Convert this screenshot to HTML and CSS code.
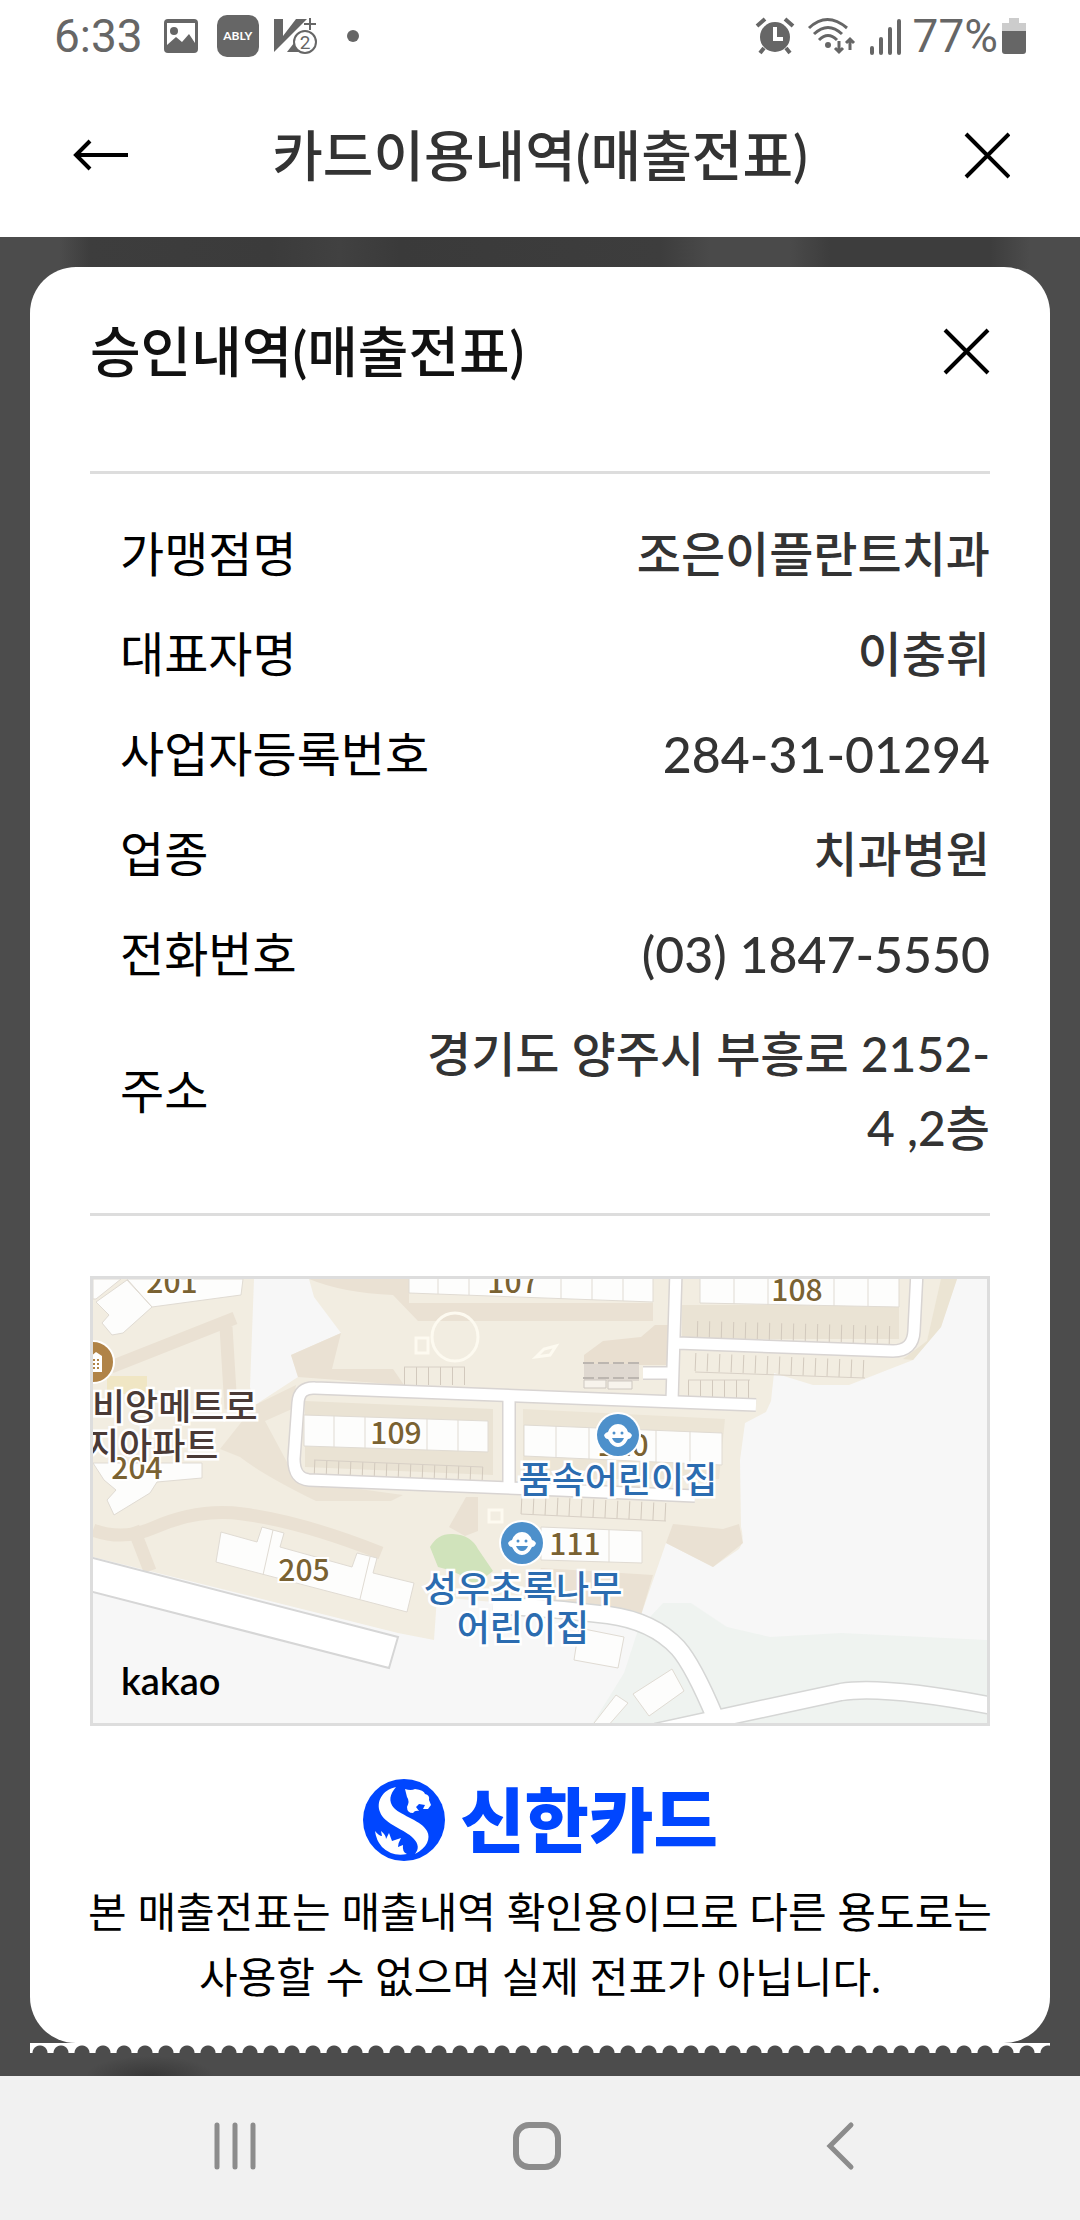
FILE: index.html
```html
<!DOCTYPE html>
<html lang="ko">
<head>
    <meta charset="UTF-8">
    <meta name="viewport" content="width=device-width, initial-scale=1.0">
    <title>카드이용내역(매출전표)</title>
    <link rel="stylesheet" href="styles.css">
</head>
<body>
<div class="status-bar">
    <div class="status-left">
        <span class="clock">6:33</span>
        <svg class="icon-photo" width="36" height="36" viewBox="0 0 36 36">
            <rect x="1" y="1" width="34" height="34" rx="4" fill="#666"/>
            <path d="M4 5h28v20l-6-9-7 8-6-5-9 8z" fill="#fff"/>
            <circle cx="11" cy="13" r="4" fill="#666"/>
        </svg>
        <span class="ably">ABLY</span>
        <svg width="44" height="38" viewBox="0 0 44 38">
            <path d="M1 2h9v17L23 2h11L1 35z" fill="#666"/>
            <path d="M14 35l14-18v18z" fill="#666"/>
            <path d="M37 1v12M31 7h12" stroke="#666" stroke-width="2"/>
            <circle cx="32" cy="25" r="11" fill="#fff" stroke="#666" stroke-width="2"/>
            <text x="32" y="32" class="v-count">2</text>
        </svg>
        <span class="dot"></span>
    </div>
    <div class="status-right">
        <svg width="40" height="38" viewBox="0 0 40 38">
            <circle cx="20" cy="20" r="15" fill="#666"/>
            <path d="M2 9l8-7M38 9l-8-7M9 31l-4 5M31 31l4 5" stroke="#666" stroke-width="4"/>
            <path d="M20 10v12h8" fill="none" stroke="#fff" stroke-width="4"/>
        </svg>
        <svg width="50" height="38" viewBox="0 0 50 38">
            <g fill="none" stroke="#666" stroke-width="3">
                <path d="M2 11q18-17 38 0"/>
                <path d="M7 17q14-13 28 0"/>
                <path d="M12 23q9-9 18 0"/>
                <path d="M32 24v11M28 31l4 4 4-4M43 33V22M39 26l4-4 4 4"/>
            </g>
            <circle cx="21" cy="28" r="3" fill="#666"/>
        </svg>
        <svg width="34" height="38" viewBox="0 0 34 38">
            <path d="M3 31v5M12 22v14M21 12v24M30 4v32" stroke="#666" stroke-width="4" stroke-linecap="round"/>
        </svg>
        <span class="battery-text">77%</span>
        <svg width="24" height="38" viewBox="0 0 24 38">
            <path d="M7 1h10v5h7v9H0V6h7z" fill="#ccc"/>
            <path d="M0 14h24v20q0 3-3 3H3q-3 0-3-3z" fill="#666"/>
        </svg>
    </div>
</div>

<header class="navbar">
    <button class="icon-btn" aria-label="뒤로">
        <svg width="60" height="60" viewBox="0 0 60 60" fill="none" stroke="#000" stroke-width="4">
            <path d="M58 30H6M20 16L6 30l14 14"/>
        </svg>
    </button>
    <h1>카드이용내역(매출전표)</h1>
    <button class="icon-btn" aria-label="닫기">
        <svg width="60" height="60" viewBox="0 0 60 60" fill="none" stroke="#000" stroke-width="4">
            <path d="M16 9l43 43M59 9L16 52"/>
        </svg>
    </button>
</header>

<main class="backdrop">
    <section class="receipt">
        <div class="receipt-head">
            <h2>승인내역(매출전표)</h2>
            <button class="icon-btn" aria-label="매출전표 닫기">
                <svg width="60" height="60" viewBox="0 0 60 60" fill="none" stroke="#000" stroke-width="4">
                    <path d="M15 9l43 43M58 9L15 52"/>
                </svg>
            </button>
        </div>

        <dl class="details">
            <div class="row"><dt>가맹점명</dt><dd>조은이플란트치과</dd></div>
            <div class="row"><dt>대표자명</dt><dd>이충휘</dd></div>
            <div class="row"><dt>사업자등록번호</dt><dd class="number">284-31-01294</dd></div>
            <div class="row"><dt>업종</dt><dd>치과병원</dd></div>
            <div class="row"><dt>전화번호</dt><dd class="number">(03) 1847-5550</dd></div>
            <div class="row"><dt>주소</dt><dd>경기도 양주시 부흥로 2152-<wbr>4 ,2층</dd></div>
        </dl>

        <div class="map">
            <svg viewBox="0 0 894 444">
                <defs>
                    <g id="face">
                        <circle r="23" fill="#fff"/>
                        <circle r="21" fill="#4d90cb"/>
                        <path d="M-14 0q2-3 4-3 3-8 10-8t10 8q2 0 4 3-1 4-4 4-4 8-10 8t-10-8q-3 0-4-4z" fill="#fff"/>
                        <circle cx="-4" cy="-2" r="1.5" fill="#4d90cb"/>
                        <circle cx="4" cy="-2" r="1.5" fill="#4d90cb"/>
                        <path d="M-6 3H6q-2 5-6 5t-6-5z" fill="#4d90cb"/>
                    </g>
                    <g id="roads">
                        <path d="M663 126L427 117 222 109Q206 108 205 124L201 180Q201 200 216 201L467 211 602 217"/>
                        <path d="M416 118V208M583-8L579 122M584 64L800 72Q820 72 821 52L824-8M550 94H578"/>
                    </g>
                    <g id="lanes">
                        <path d="M400 326L470 331 515 336Q560 342 585 369 600 386 622 438"/>
                        <path d="M563 453L641 436 748 413Q790 406 900 427"/>
                    </g>
                </defs>

                <!-- ground -->
                <rect width="894" height="444" fill="#f7f7f7"/>
                <path d="M0 0H864L848 48 820 81 756 106H720L681 94 678 122 673 133 652 144 647 181 648 248Q652 262 646 270L620 288 573 264 548 336 344 318 341 361 305 354 0 278z" fill="#f2ede1"/>
                <path d="M161 0H216L221 18 248 54 198 76 205 98 162 126 157 108z" fill="#f7f7f7"/>
                <path d="M570 324H598L634 348 677 358 748 354 894 361V444H500L531 394 545 351z" fill="#eff3f0"/>

                <!-- footpaths and slopes -->
                <g fill="none" stroke="#eae1d3" stroke-width="13">
                    <path d="M0 251Q30 262 60 249 105 229 150 235 210 243 288 274"/>
                    <path d="M40 248L57 292M18 88L142 39M133 48L138 130"/>
                </g>
                <path d="M216 0Q250 14 300 16L325 42H560V24H316V0z" fill="#eae1d3"/>
                <path d="M248 54L198 76 205 98 311 106 300 90 239 90z" fill="#eae1d3"/>
                <path d="M162 126L203 106 199 130 172 142 195 185 230 205 310 216 298 222 223 222Q170 196 147 178L127 170z" fill="#ebe3d5"/>
                <path d="M491 76L510 62 548 58 562 46H577V86H491z" fill="#e9dfd0"/>
                <path d="M373 218H385V252L372 257 356 248z" fill="#eae1d3"/>
                <path d="M573 264L580 245 630 250 646 245 650 264 620 288z" fill="#eae1d3"/>
                <path d="M448 289L560 296 548 336 430 324z" fill="#eae1d3"/>
                <path d="M848 0H864L848 48 820 81 810 80 834 62z" fill="#ebe4d3"/>
                <path d="M589 26H806V60H589zM212 122L400 130V196L212 188z" fill="#eae3d4"/>
                <path d="M430 130L632 140 626 200H430z" fill="#ece5d6"/>
                <path d="M14 97h40v18H14z" fill="#f0e6c4"/>
                <path d="M337 268Q345 254 360 255 378 256 385 270L400 292 382 306Q365 292 345 288z" fill="#d0e3bb"/>
                <g fill="none" stroke="#fdfaf0" stroke-width="3">
                    <ellipse cx="362" cy="58" rx="23" ry="24"/>
                    <path d="M323 59h12v15h-12zM443 78l8-8 12-3-6 9zM396 231h13v12h-13z"/>
                </g>

                <!-- parking stalls -->
                <g fill="none" stroke="#d2c9bd" stroke-width="18" stroke-dasharray="1 11">
                    <path d="M221 190L390 197M311 97H372M595 110H657M428 226L573 233"/>
                    <path d="M602 83L772 90M604 51L798 56"/>
                </g>
                <path d="M221 181L390 188M311 88H372M595 101H657M602 93L772 99M428 235L573 242" fill="none" stroke="#d8d0c6"/>
                <path d="M491 85H546V102H491z" fill="#dfd8d0"/>
                <path d="M490 84H548M490 99H548" fill="none" stroke="#bcb6b0" stroke-width="2" stroke-dasharray="11 4"/>
                <path d="M491 101h22v8h-22zM515 102h24v8h-24z" fill="#f7f3ec" stroke="#cdc7c0"/>

                <!-- roads -->
                <use href="#roads" fill="none" stroke="#d8d4d2" stroke-width="14"/>
                <use href="#roads" fill="none" stroke="#fff" stroke-width="11"/>
                <use href="#lanes" fill="none" stroke="#d5d6d5" stroke-width="19"/>
                <use href="#lanes" fill="none" stroke="#fff" stroke-width="16"/>
                <path d="M-4 278L305 358 296 389-4 312z" fill="#fff" stroke="#d6d6d6" stroke-width="2"/>

                <!-- buildings -->
                <g fill="#fdfdfc" stroke="#e0dbd3">
                    <path d="M34 0H150L148 16 59 28zM34 1L59 28 30 54 19 56 9 44 16 36 3 23zM0 0H28L3 20H0z"/>
                    <path d="M0 184H109V199L64 203 57 214 21 236 14 221 23 211 11 201z"/>
                    <path d="M128 253L164 263 169 248 191 254 187 268 259 288 264 274 284 279 280 294 321 304 314 333 123 283zM180 251L170 296M277 278L267 320"/>
                    <path d="M211 136L395 142V173L211 167zM241 137V168M272 138V169M334 140V171M365 141V172"/>
                    <path d="M316-2H560V23L316 14zM345 0V15M376 0V16M468 0V20M499 0V21M530 0V22"/>
                    <path d="M607-2H806V28L607 24zM641 0V25M675 0V26M741 0V27M775 0V27"/>
                    <path d="M431 146L629 154V186L431 177zM463 147V179M496 149V180M563 151V183M597 152V184"/>
                    <path d="M448 248L549 252V284L448 281zM516 251V283"/>
                    <path d="M486 349L531 358 525 389 481 381zM579 390L591 412 556 437 540 415zM523 416L535 424 514 448 498 448z"/>
                </g>

                <!-- building numbers -->
                <g class="map-number">
                    <text x="79" y="14">201</text>
                    <text x="420" y="14">107</text>
                    <text x="704" y="22">108</text>
                    <text x="303" y="165">109</text>
                    <text x="530" y="177">110</text>
                    <text x="482" y="276">111</text>
                    <text x="44" y="200">204</text>
                    <text x="211" y="302">205</text>
                </g>

                <!-- places -->
                <circle cy="83" r="21" fill="#b08347" stroke="#fff" stroke-width="2"/>
                <path d="M-8 93V77h6l5-4 6 4v16z" fill="#fff"/>
                <path d="M0 81h7M0 85h7M0 89h7" stroke="#b08347" stroke-width="2" stroke-dasharray="2 2"/>
                <use href="#face" x="525" y="156"/>
                <use href="#face" x="429" y="264"/>
                <g class="map-place">
                    <text x="-1" y="141">비앙메트로</text>
                    <text x="-7" y="180">지아파트</text>
                </g>
                <g class="map-place care">
                    <text x="525" y="214">품속어린이집</text>
                    <text x="430" y="323">성우초록나무</text>
                    <text x="430" y="362">어린이집</text>
                </g>
                <text x="28" y="416" class="kakao">kakao</text>
            </svg>
        </div>

        <div class="brand">
            <svg width="84" height="84" viewBox="0 0 84 84">
                <circle cx="42" cy="42" r="41" fill="#0046ff"/>
                <g fill="#fff">
                    <path d="M34 9C20 12 14 24 18 34 22 46 44 52 51 60 57 66 57 71 53 76 65 70 69 60 65 53 60 43 40 38 32 30 26 23 28 16 34 9z"/>
                    <path d="M43 11Q49 13 53 11 62 12 63 16 68 17 67 22L69 27 66 31 61 31 63 27 57 26 54 29 57 33Q53 32 51 35 45 35 45 29 48 23 45 19z"/>
                    <path d="M13 53Q17 58 20 58L19 53Q24 57 24 61L27 55 30 63 39 60Q36 65 36 69L41 67Q40 74 45 76 30 79 20 69 14 62 13 53z"/>
                </g>
            </svg>
            <span>신한카드</span>
        </div>
        <p class="notice">본 매출전표는 매출내역 확인용이므로 다른 용도로는 사용할 수 없으며 실제 전표가 아닙니다.</p>
    </section>
    <div class="torn-edge"></div>
</main>

<nav class="system-nav">
    <button aria-label="최근 앱">
        <svg width="48" height="50" viewBox="0 0 48 50">
            <path d="M6 4v42M24 4v42M42 4v42" stroke="#8c8c8c" stroke-width="5" stroke-linecap="round"/>
        </svg>
    </button>
    <button aria-label="홈">
        <svg width="50" height="50" viewBox="0 0 50 50">
            <rect x="4" y="4" width="42" height="42" rx="13" fill="none" stroke="#8c8c8c" stroke-width="6"/>
        </svg>
    </button>
    <button aria-label="이전">
        <svg width="30" height="50" viewBox="0 0 30 50">
            <path d="M26 4L5 25l21 21" fill="none" stroke="#8c8c8c" stroke-width="5" stroke-linecap="round"/>
        </svg>
    </button>
</nav>
</body>
</html>
```
FILE: styles.css
```css
* {
    box-sizing: border-box;
}

body {
    font-family: Lato, "Noto Sans CJK KR", sans-serif;
    background-color: #fff;
    color: #000;
    margin: 0;
    min-height: 100vh;
    display: flex;
    flex-direction: column;
}

svg {
    display: block;
}

button {
    border: none;
    background: none;
    padding: 0;
    cursor: pointer;
}

.status-bar {
    height: 72px;
    padding: 0 54px;
    display: flex;
    justify-content: space-between;
    align-items: center;
    font-family: Roboto, sans-serif;
    font-size: 46px;
    color: #666;
}

.status-left,
.status-right {
    display: flex;
    align-items: center;
}

.icon-photo {
    margin: 0 18px 0 20px;
}

.ably {
    width: 42px;
    height: 42px;
    margin-right: 14px;
    border-radius: 10px;
    background-color: #666;
    color: #fff;
    font-family: Lato, sans-serif;
    font-size: 12px;
    font-weight: bold;
    line-height: 42px;
    text-align: center;
}

.v-count {
    font-size: 19px;
    text-anchor: middle;
    fill: #666;
}

.dot {
    width: 12px;
    height: 12px;
    margin-left: 30px;
    border-radius: 50%;
    background-color: #666;
}

.status-right {
    gap: 12px;
}

.battery-text {
    margin: 0 -8px 0 -2px;
}

.navbar {
    height: 165px;
    padding: 0 70px;
    display: flex;
    justify-content: space-between;
    align-items: center;
}

.navbar h1,
.receipt-head h2 {
    margin: 0;
    font-size: 55px;
    font-weight: 500;
    line-height: 80px;
}

.navbar h1 {
    color: #333;
}

.backdrop {
    flex: 1;
    padding: 30px 30px 23px;
    background-color: #4c4c4c;
    background-image:
        radial-gradient(ellipse 64px 20px at 150px 100%, #383838, transparent),
        linear-gradient(90deg, #4c4c4c 60px, #3d3d3d 90px, #3b3b3b 270px, #414141 340px, #3a3a3a 400px, #3d3d3d 660px, #4a4a4a 710px, #4a4a4a 790px, #3d3d3d 830px, #3d3d3d 990px, #4c4c4c 1030px);
    background-size: auto, 100% 32px;
    background-repeat: no-repeat;
}

.receipt {
    padding: 0 60px 33px;
    background-color: #fff;
    border-radius: 46px;
}

.receipt-head {
    padding: 44px 0 80px;
    border-bottom: 3px solid #ddd;
    display: flex;
    justify-content: space-between;
    align-items: center;
}

.receipt-head h2 {
    color: #111;
}

.details {
    margin: 0 0 60px;
    padding: 43px 0 48px 30px;
    border-bottom: 3px solid #ddd;
    display: flex;
    flex-direction: column;
    gap: 26px;
    font-size: 48px;
    line-height: 74px;
}

.row {
    display: flex;
    justify-content: space-between;
    align-items: center;
}

.row dd {
    max-width: 580px;
    margin: 0;
    color: #333;
    font-weight: 500;
    text-align: right;
    word-break: keep-all;
}

.row .number {
    font-size: 50px;
}

.map {
    border: 3px solid #ddd;
}

.map svg {
    width: 100%;
    font-family: "Noto Sans CJK KR", sans-serif;
}

.map-number {
    font-size: 30px;
    font-weight: 500;
    fill: #7a6232;
    stroke: #fff;
    stroke-width: 4px;
    paint-order: stroke;
    text-anchor: middle;
}

.map-place {
    font-size: 36px;
    font-weight: 500;
    fill: #4a3a36;
    stroke: #fff;
    stroke-width: 5px;
    paint-order: stroke;
}

.care {
    fill: #2b6cb0;
    text-anchor: middle;
}

.kakao {
    font-family: Lato, sans-serif;
    font-size: 38px;
    font-weight: 600;
}

.brand {
    margin: 52px 0 18px;
    height: 84px;
    display: flex;
    justify-content: center;
    align-items: center;
    gap: 14px;
    color: #0046ff;
    font-size: 70px;
    font-weight: 900;
    line-height: 84px;
}

.notice {
    margin: 0 -6px;
    font-size: 42px;
    line-height: 65px;
    text-align: center;
    word-break: keep-all;
}

.torn-edge {
    height: 10px;
    background: radial-gradient(circle at 10px 10px, transparent 7px, #fff 8px) 0 0 / 21px 10px;
}

.system-nav {
    height: 144px;
    padding: 0 89px 4px 84px;
    background-color: #f1f1f1;
    display: flex;
}

.system-nav button {
    flex: 1;
    display: flex;
    justify-content: center;
    align-items: center;
}
```
